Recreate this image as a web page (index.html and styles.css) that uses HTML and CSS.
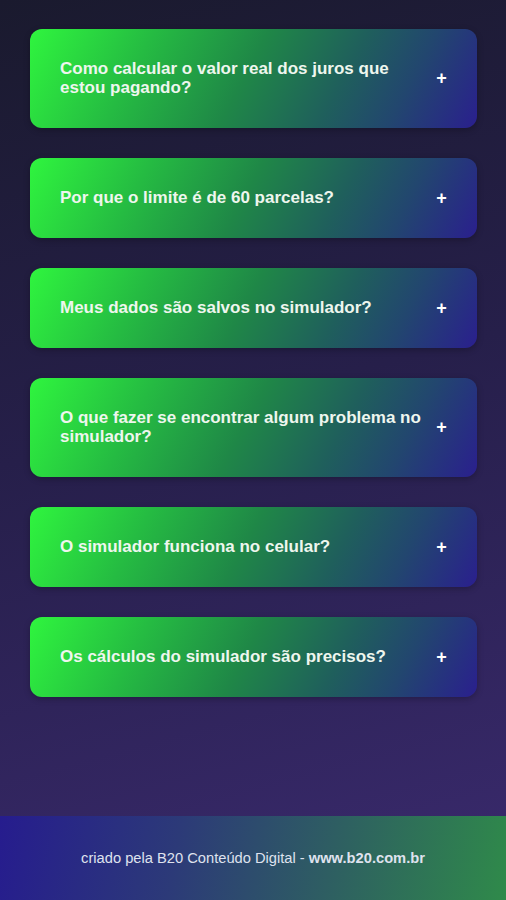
FILE: index.html
```html
<!DOCTYPE html>
<html lang="pt-BR">
<head>
<meta charset="utf-8">
<title>FAQ</title>
<link rel="stylesheet" href="styles.css">
</head>
<body>
<div class="page">
  <main class="faq">
    <div class="item"><span class="q">Como calcular o valor real dos juros que estou pagando?</span><span class="plus">+</span></div>
    <div class="item"><span class="q">Por que o limite é de 60 parcelas?</span><span class="plus">+</span></div>
    <div class="item"><span class="q">Meus dados são salvos no simulador?</span><span class="plus">+</span></div>
    <div class="item"><span class="q">O que fazer se encontrar algum problema no simulador?</span><span class="plus">+</span></div>
    <div class="item"><span class="q">O simulador funciona no celular?</span><span class="plus">+</span></div>
    <div class="item"><span class="q">Os cálculos do simulador são precisos?</span><span class="plus">+</span></div>
  </main>
  <footer class="footer">criado pela B20 Conteúdo Digital - <b>www.b20.com.br</b></footer>
</div>
</body>
</html>
```
FILE: styles.css
```css
html, body {
  margin: 0;
  padding: 0;
  height: 100%;
}
body {
  font-family: "Liberation Sans", Arial, sans-serif;
  background: #1b1a30;
}
.page {
  min-height: 900px;
  display: flex;
  flex-direction: column;
  background: linear-gradient(165deg, #1a1a2e 0%, #261f4a 45%, #3a2a6e 100%);
}
.faq {
  flex: 1;
  display: flex;
  flex-direction: column;
  gap: 30px;
  padding: 29px 29px 0 30px;
}
.item {
  display: flex;
  align-items: center;
  gap: 7px;
  padding: 30px 30px 31px 30px;
  border-radius: 12px;
  background: linear-gradient(118deg, #2ff53e 0%, #25bb42 25%, #1f8747 48%, #1f5f5c 68%, #22466f 82%, #2a1f8e 100%);
  box-shadow: 0 2px 6px rgba(0, 0, 0, 0.25);
  color: #eef6ee;
}
.q {
  flex: 1;
  font-weight: bold;
  font-size: 17px;
  line-height: 19px;
}
.plus {
  flex: none;
  width: 11px;
  text-align: center;
  font-weight: bold;
  font-size: 18px;
  line-height: 18px;
  color: #ffffff;
}
.footer {
  height: 84px;
  display: flex;
  align-items: center;
  justify-content: center;
  font-size: 14.7px;
  color: #dfe2ee;
  background: linear-gradient(100deg, #261c8e 0%, #2c3a78 35%, #2e5e62 65%, #2f8a4a 100%);
}
.footer b {
  margin-left: 4px;
}
```
